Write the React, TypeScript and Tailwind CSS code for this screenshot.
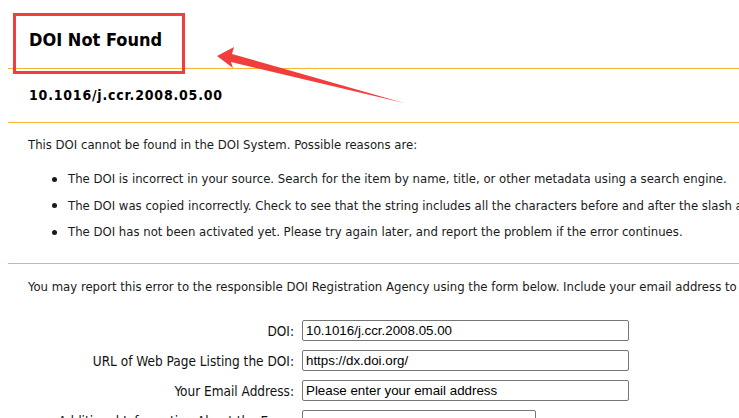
import React from 'react';

const reasons = [
  'The DOI is incorrect in your source. Search for the item by name, title, or other metadata using a search engine.',
  'The DOI was copied incorrectly. Check to see that the string includes all the characters before and after the slash and no sending or trailing spaces.',
  'The DOI has not been activated yet. Please try again later, and report the problem if the error continues.',
];

const fields = [
  { label: 'DOI:', value: '10.1016/j.ccr.2008.05.00', wide: true },
  { label: 'URL of Web Page Listing the DOI:', value: 'https://dx.doi.org/', wide: true },
  { label: 'Your Email Address:', value: 'Please enter your email address', wide: true },
  { label: 'Additional Information About the Error:', value: '', wide: false },
];

export default function App() {
  return (
    <div
      className="relative w-[739px] h-[418px] overflow-hidden bg-white text-[13px] text-[#1a1a1a] whitespace-nowrap"
      style={{ fontFamily: '"DejaVu Sans Condensed", "DejaVu Sans", sans-serif' }}
    >
      {/* Title */}
      <div className="ml-[8px] h-[69px] border-b border-[#f8b334] pl-[21px] pt-[29px]">
        <h1 className="text-[18px] font-bold leading-[22px] text-black">DOI Not Found</h1>
      </div>

      {/* DOI */}
      <div className="ml-[8px] h-[54px] border-b border-[#f8b334] pl-[21px] pt-[17px]">
        <h2 className="text-[14px] font-bold leading-[18px] tracking-[0.8px] text-black">10.1016/j.ccr.2008.05.00</h2>
      </div>

      {/* Reasons */}
      <div className="ml-[8px] h-[141px] border-b border-[#f8b334] pl-[20px] pt-[14px]">
        <p className="leading-[16px]">This DOI cannot be found in the DOI System. Possible reasons are:</p>
        <ul className="mt-[18px] flex flex-col gap-[10.5px] pl-[24px]">
          {reasons.map((r) => (
            <li key={r} className="flex items-center leading-[16px]">
              <span className="mr-[11px] inline-block h-[5px] w-[5px] shrink-0 rounded-full bg-[#1a1a1a]" />
              {r}
            </li>
          ))}
        </ul>
      </div>

      {/* Report form */}
      <div className="ml-[8px] pl-[20px] pt-[15px]">
        <p className="leading-[16px]">
          You may report this error to the responsible DOI Registration Agency using the form below. Include your email address to receive confirmation and feedback.
        </p>
        <div className="mt-[25px] flex flex-col gap-[9px]">
          {fields.map((f) => (
            <div key={f.label} className="flex items-center">
              <label className="w-[266px] text-right text-[13.5px] leading-[16px] text-[#111]">{f.label}</label>
              <div
                className={`ml-[8px] h-[21px] border border-[#767676] rounded-[2px] px-[3px] text-[13.33px] leading-[19px] text-black ${f.wide ? 'w-[327px]' : 'w-[234px]'}`}
                style={{ fontFamily: '"Liberation Sans", Arial, sans-serif' }}
              >
                {f.value}
              </div>
            </div>
          ))}
        </div>
      </div>

      {/* Annotation */}
      <div className="absolute left-[13px] top-[13px] h-[61px] w-[172px] border-[3px] border-[#f23d3d]" />
      <svg className="absolute left-0 top-0" width="739" height="418" viewBox="0 0 739 418">
        <polygon points="217,56 234,47 232,54 404,103 231,62 233,68" fill="#f23d3d" />
      </svg>
    </div>
  );
}
